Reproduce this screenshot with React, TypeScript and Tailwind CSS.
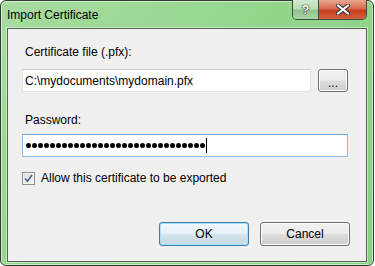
import React from 'react';

const font = { fontFamily: '"Liberation Sans", Arial, sans-serif' };

function CloseGlyph() {
  return (
    <svg width="16" height="11" viewBox="0 0 16 11">
      <path d="M3 1.5 L13 9.5 M13 1.5 L3 9.5" stroke="#3a3a3a" strokeWidth="4.2" strokeLinecap="round" />
      <path d="M3 1.5 L13 9.5 M13 1.5 L3 9.5" stroke="#ffffff" strokeWidth="2.2" strokeLinecap="round" />
    </svg>
  );
}

function CheckGlyph() {
  return (
    <svg width="9" height="9" viewBox="0 0 9 9">
      <path d="M1 4.5 L3.5 7.2 L8 1" fill="none" stroke="#4a5f8c" strokeWidth="1.6" />
    </svg>
  );
}

function WinButton({ label, isDefault }: { label: string; isDefault?: boolean }) {
  return (
    <button
      type="button"
      className={
        'w-[90px] h-[24px] rounded-[3px] border flex items-center justify-center text-[12px] text-black ' +
        (isDefault
          ? 'border-[#3c7fb1] shadow-[inset_0_0_0_1px_#a6e0fb] bg-[linear-gradient(to_bottom,#f0f7fb_0%,#e5f1f8_48%,#d4e3ec_52%,#c9dbe6_100%)]'
          : 'border-[#707070] shadow-[inset_0_0_0_1px_#fcfcfc] bg-[linear-gradient(to_bottom,#f2f2f2_0%,#ebebeb_48%,#dddddd_52%,#cfcfcf_100%)]')
      }
      style={font}
    >
      {label}
    </button>
  );
}

export default function App() {
  const dots = Array.from({ length: 30 });

  return (
    <div className="w-[375px] h-[266px] bg-white overflow-hidden" style={font}>
      <div className="w-[374px] h-[266px] rounded-[6px] border border-[#2f3d2f] shadow-[inset_0_0_0_1px_rgba(255,255,255,0.55)] bg-[linear-gradient(135deg,#a8dca1_0%,#92d68b_45%,#88d181_100%)] flex flex-col px-[6px] pb-[3px]">
        {/* Title bar */}
        <div className="h-[27px] flex items-start justify-between">
          <span className="pt-[7px] text-[12px] leading-[15px] text-black">Import Certificate</span>
          <div className="-mt-px flex h-[20px] border border-t-0 border-[#3b4a3b] rounded-b-[5px] overflow-hidden">
            <div className="w-[26px] h-full border-r border-[#3b4a3b] bg-[linear-gradient(to_bottom,#d3ead0_0%,#b9dcb4_45%,#92c38d_55%,#a9d6a3_100%)] flex items-center justify-center">
              <span className="text-[13px] font-bold leading-none text-white [text-shadow:0_0_1px_#222,0_0_1px_#222,0_0_1px_#222]">?</span>
            </div>
            <div className="w-[47px] h-full bg-[linear-gradient(to_bottom,#e9a591_0%,#d86b4e_45%,#c53f1d_55%,#d5623f_100%)] flex items-center justify-center">
              <CloseGlyph />
            </div>
          </div>
        </div>

        {/* Client area */}
        <div className="flex-1 border border-[#51654f] shadow-[0_0_0_1px_rgba(255,255,255,0.45)] bg-[#f0f0f0] flex flex-col pl-[14px] pt-[15px]">
          <span className="text-[12px] leading-[16px] text-black pl-[3px]">Certificate file (.pfx):</span>

          <div className="mt-[9px] flex gap-[7px]">
            <div className="w-[289px] h-[23px] bg-white border border-[#dde3ea] border-t-[#c9ced6] flex items-center pl-[2px] text-[12px] text-black">
              C:\mydocuments\mydomain.pfx
            </div>
            <button
              type="button"
              className="w-[30px] h-[23px] rounded-[3px] border border-[#707070] shadow-[inset_0_0_0_1px_#fcfcfc] bg-[linear-gradient(to_bottom,#f2f2f2_0%,#ebebeb_48%,#dddddd_52%,#cfcfcf_100%)] flex items-center justify-center text-[12px] leading-none text-black pt-[4px]"
              style={font}
            >
              ...
            </button>
          </div>

          <span className="mt-[20px] text-[12px] leading-[16px] text-black pl-[3px]">Password:</span>

          <div className="mt-[6px] w-[326px] h-[23px] bg-white border border-[#8fbde6] border-t-[#6ea6d9] flex items-center pl-[3px]">
            <div className="flex gap-[1px]">
              {dots.map((_, i) => (
                <div key={i} className="w-[5px] h-[5px] rounded-full bg-black" />
              ))}
            </div>
            <div className="ml-[1px] w-px h-[15px] bg-black" />
          </div>

          <div className="mt-[13px] h-[16px] flex items-center">
            <div className="w-[13px] h-[13px] border border-[#8e8f8f] bg-[linear-gradient(135deg,#dcdcdc_0%,#f4f4f4_100%)] shadow-[inset_0_0_0_1px_#f4f4f4] flex items-center justify-center">
              <CheckGlyph />
            </div>
            <span className="ml-[6px] text-[12px] leading-[16px] text-black">Allow this certificate to be exported</span>
          </div>

          <div className="mt-[36px] flex justify-end gap-[11px] pr-[16px]">
            <WinButton label="OK" isDefault />
            <WinButton label="Cancel" />
          </div>
        </div>
      </div>
    </div>
  );
}
